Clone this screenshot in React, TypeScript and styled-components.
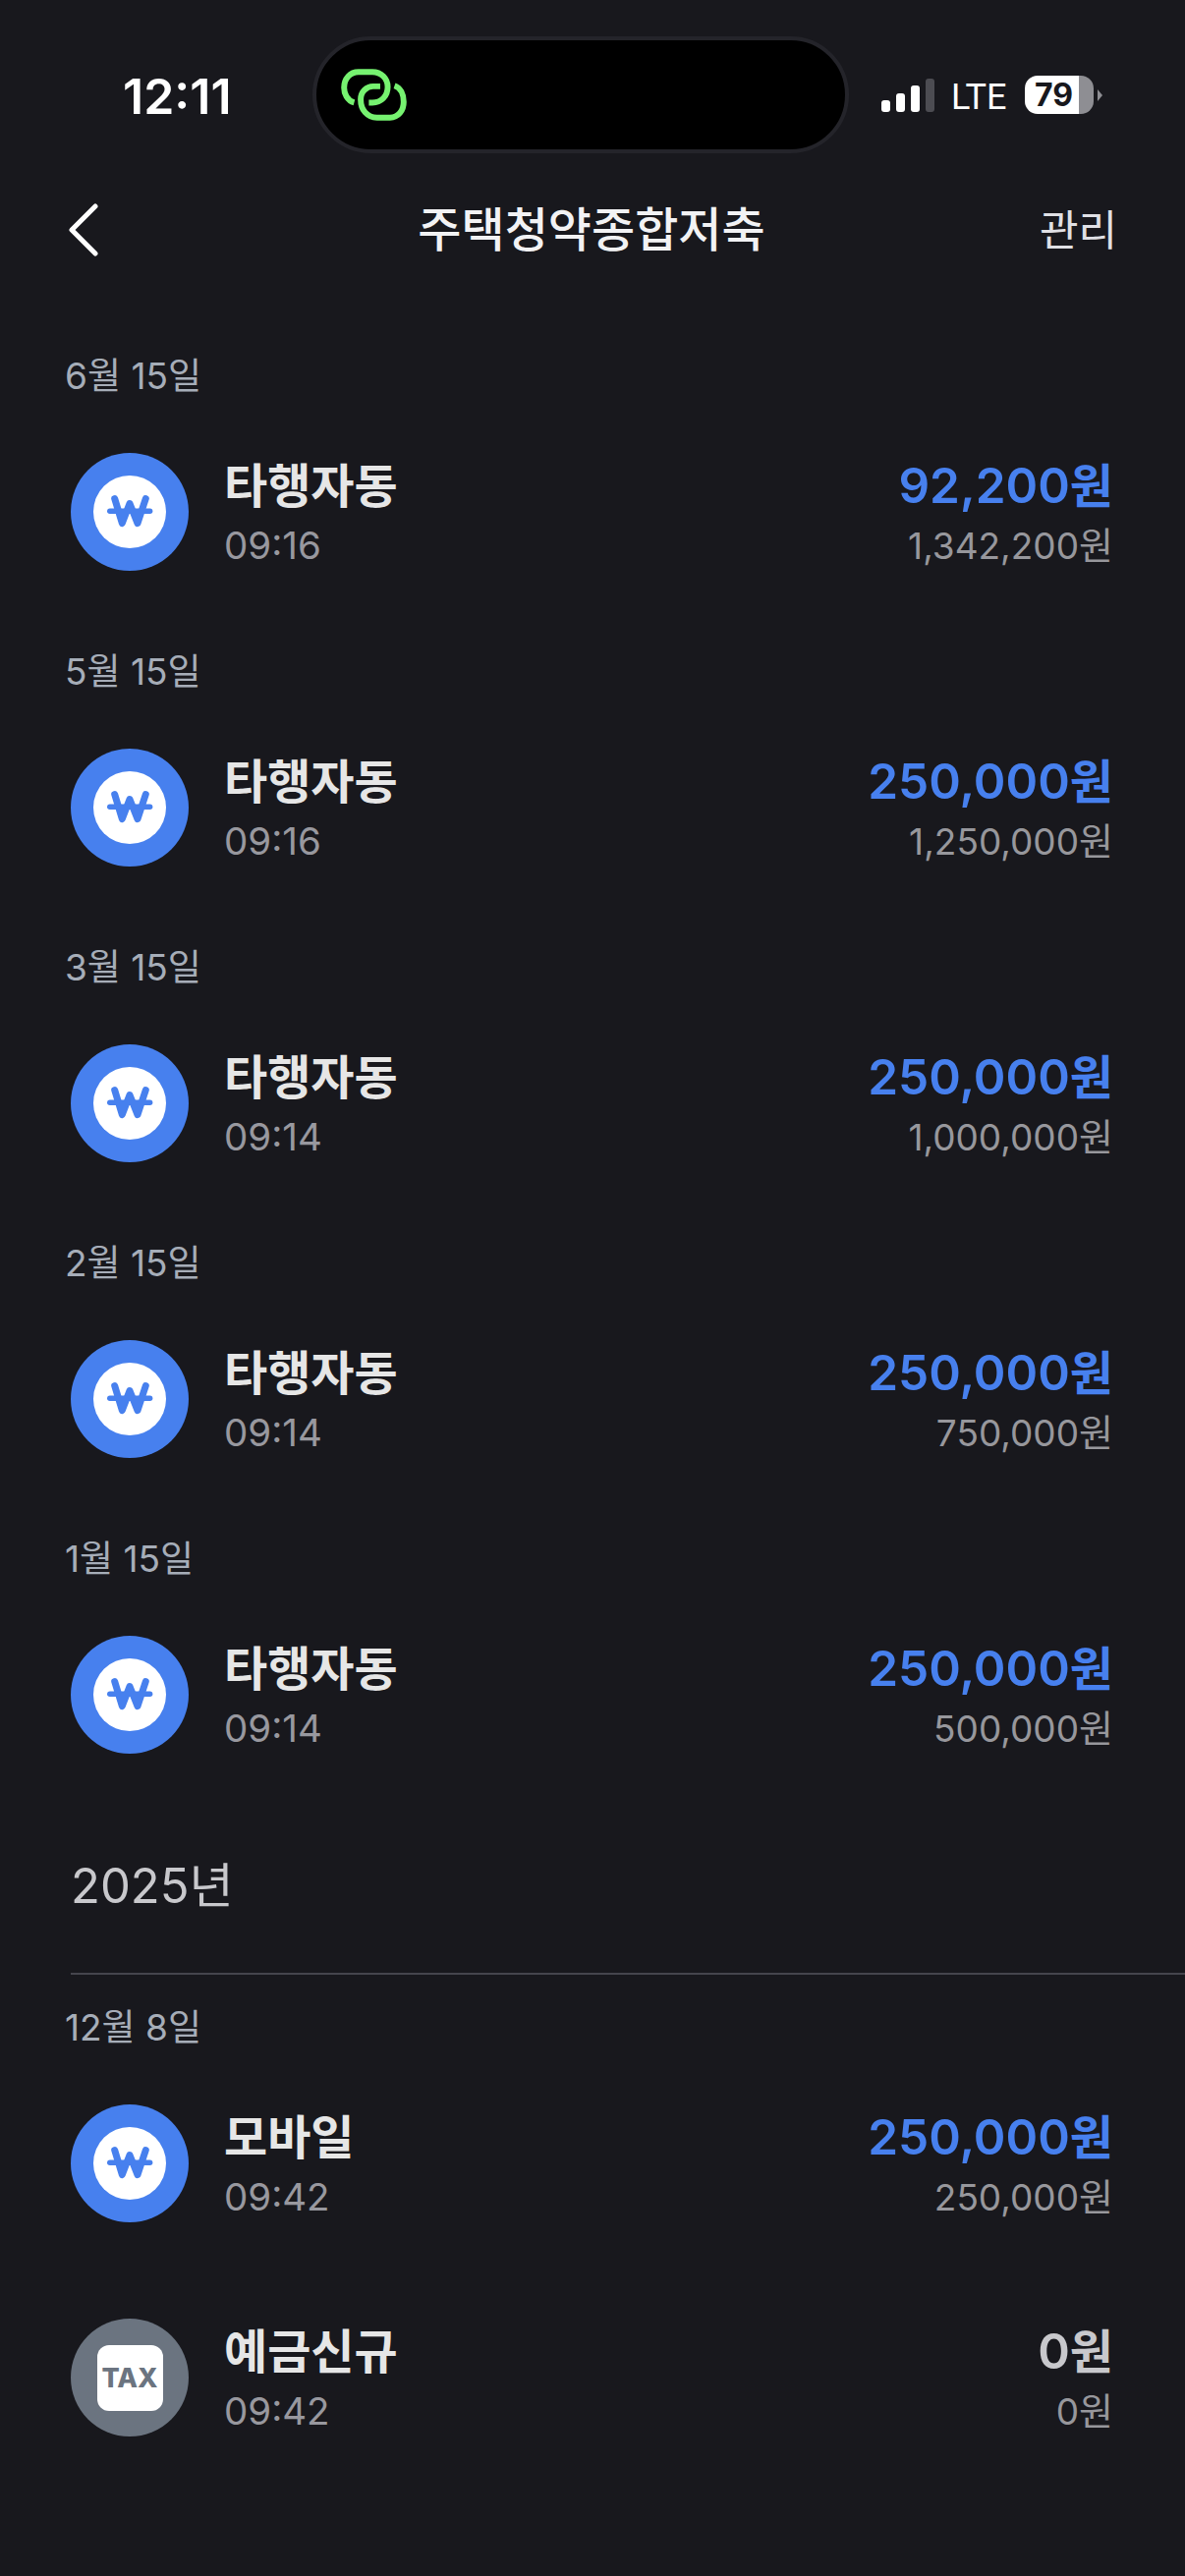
import React from "react";
import styled, { createGlobalStyle } from "styled-components";

type Transaction = {
  title: string;
  time: string;
  amount: string;
  balance: string;
  kind: "won" | "tax";
};

type Day = {
  date: string;
  items: Transaction[];
};

const recentDays: Day[] = [
  { date: "6월 15일", items: [{ title: "타행자동", time: "09:16", amount: "92,200", balance: "1,342,200", kind: "won" }] },
  { date: "5월 15일", items: [{ title: "타행자동", time: "09:16", amount: "250,000", balance: "1,250,000", kind: "won" }] },
  { date: "3월 15일", items: [{ title: "타행자동", time: "09:14", amount: "250,000", balance: "1,000,000", kind: "won" }] },
  { date: "2월 15일", items: [{ title: "타행자동", time: "09:14", amount: "250,000", balance: "750,000", kind: "won" }] },
  { date: "1월 15일", items: [{ title: "타행자동", time: "09:14", amount: "250,000", balance: "500,000", kind: "won" }] },
];

const lastYearDays: Day[] = [
  {
    date: "12월 8일",
    items: [
      { title: "모바일", time: "09:42", amount: "250,000", balance: "250,000", kind: "won" },
      { title: "예금신규", time: "09:42", amount: "0", balance: "0", kind: "tax" },
    ],
  },
];

const DayGroup: React.FC<{ day: Day }> = ({ day }) => (
  <Group>
    <DateLabel>{day.date}</DateLabel>
    <Rows>
      {day.items.map((item) => (
        <Row key={item.title}>
          {item.kind === "won" ? (
            <Badge $color="#4780ee">
              <WonDisc>
                <svg width="74" height="74" viewBox="0 0 74 74" fill="none" stroke="#4780ee" strokeLinecap="round" strokeLinejoin="round">
                  <path d="M21.7 23.5 29.3 48.6 37 28.5 45 48.6 53.3 23.5" strokeWidth="7" />
                  <path d="M16.8 36.3H57.6" strokeWidth="5.5" />
                </svg>
              </WonDisc>
            </Badge>
          ) : (
            <Badge $color="#6b7480">
              <TaxCard>TAX</TaxCard>
            </Badge>
          )}
          <Info>
            <Title>{item.title}</Title>
            <Time>{item.time}</Time>
          </Info>
          <Amounts>
            <Amount $positive={item.kind === "won"}>
              {item.amount}
              <AmountUnit>원</AmountUnit>
            </Amount>
            <Balance>
              {item.balance}
              <BalanceUnit>원</BalanceUnit>
            </Balance>
          </Amounts>
        </Row>
      ))}
    </Rows>
  </Group>
);

export default function App() {
  return (
    <>
      <GlobalStyle />
      <Page>
        <StatusBar>
          <Clock>12:11</Clock>
          <Island>
            <svg width="67" height="53" viewBox="112 120 201 160" fill="none" stroke="#76f270" strokeWidth="18">
              <path d="M152 224C130 218 121 196 121 178 121 150 140 130 165 130H208C235 130 255 150 255 176 255 204 235 224 208 224H197" />
              <path d="M232 174H210C190 174 172 190 172 214 172 246 192 270 222 270H262C288 270 304 248 304 222 304 198 294 178 276 172" />
            </svg>
          </Island>
          <StatusIcons>
            <Signal>
              <SignalBar $height={12} />
              <SignalBar $height={19} />
              <SignalBar $height={27} />
              <SignalBar $height={34} $off />
            </Signal>
            <Network>LTE</Network>
            <Battery $level={79}>79</Battery>
            <BatteryCap />
          </StatusIcons>
        </StatusBar>

        <Header>
          <BackButton aria-label="뒤로">
            <svg width="32" height="54" viewBox="0 0 32 54" fill="none" stroke="#fff" strokeWidth="5" strokeLinecap="round" strokeLinejoin="round">
              <path d="M28 3 4 27 28 51" />
            </svg>
          </BackButton>
          <HeaderTitle>주택청약종합저축</HeaderTitle>
          <ManageButton>관리</ManageButton>
        </Header>

        <Days>
          {recentDays.map((day) => (
            <DayGroup key={day.date} day={day} />
          ))}
        </Days>

        <YearHeading>2025년</YearHeading>
        <YearRule />

        <Days>
          {lastYearDays.map((day) => (
            <DayGroup key={day.date} day={day} />
          ))}
        </Days>
      </Page>
    </>
  );
}

const GlobalStyle = createGlobalStyle`
  html, body {
    margin: 0;
    padding: 0;
    background: #18181d;
  }
  * {
    box-sizing: border-box;
  }
`;

const Page = styled.div`
  width: 1206px;
  height: 2622px;
  overflow: hidden;
  background: #18181d;
  font-family: Inter, "Noto Sans CJK KR", sans-serif;
`;

const StatusBar = styled.div`
  display: flex;
  align-items: center;
  height: 119px;
  margin-top: 37px;
  padding-left: 125px;
`;

const Clock = styled.div`
  width: 193px;
  padding-top: 2px;
  font-size: 50px;
  font-weight: 600;
  letter-spacing: 0;
  color: #fff;
`;

const Island = styled.div`
  display: flex;
  align-items: center;
  width: 546px;
  height: 119px;
  padding-left: 25px;
  background: #000;
  border: 4px solid #24242a;
  border-radius: 60px;
`;

const StatusIcons = styled.div`
  display: flex;
  align-items: center;
  margin-left: 33px;
`;

const Signal = styled.div`
  display: flex;
  align-items: flex-end;
  gap: 6px;
  height: 34px;
`;

const SignalBar = styled.span<{ $height: number; $off?: boolean }>`
  width: 9px;
  height: ${(p) => p.$height}px;
  border-radius: 3px;
  background: ${(p) => (p.$off ? "#4c4c52" : "#fff")};
`;

const Network = styled.div`
  margin-left: 17px;
  width: 75px;
  padding-top: 4px;
  font-family: Roboto, sans-serif;
  font-size: 36px;
  font-weight: 400;
  line-height: 40px;
  color: #fff;
`;

const Battery = styled.div<{ $level: number }>`
  width: 70px;
  height: 39px;
  padding-right: 11px;
  border-radius: 13px;
  background: linear-gradient(90deg, #fff ${(p) => p.$level}%, #8e8e93 ${(p) => p.$level}%);
  font-size: 32px;
  font-weight: 700;
  line-height: 39px;
  text-align: center;
  color: #18181d;
`;

const BatteryCap = styled.span`
  width: 0;
  height: 0;
  margin-left: 4px;
  border-top: 6px solid transparent;
  border-bottom: 6px solid transparent;
  border-left: 5px solid #8e8e93;
`;

const Header = styled.div`
  display: flex;
  align-items: center;
  justify-content: space-between;
  height: 100px;
  margin-top: 28px;
  padding: 0 69px 0 69px;
`;

const BackButton = styled.div`
  display: flex;
  width: 80px;
`;

const HeaderTitle = styled.div`
  font-size: 48px;
  font-weight: 500;
  line-height: 100px;
  color: #f2f2f4;
`;

const ManageButton = styled.div`
  width: 82px;
  font-size: 43px;
  line-height: 100px;
  text-align: right;
  color: #e0e0e5;
`;

const Days = styled.div`
  display: flex;
  flex-direction: column;
  gap: 78px;
  margin-top: 74px;

  &:last-child {
    margin-top: 29px;
  }
`;

const Group = styled.section`
  display: flex;
  flex-direction: column;
  gap: 53px;
`;

const DateLabel = styled.div`
  height: 50px;
  padding-left: 66px;
  font-size: 37px;
  line-height: 50px;
  color: #a6adb8;
`;

const Rows = styled.div`
  display: flex;
  flex-direction: column;
  gap: 98px;
`;

const Row = styled.div`
  display: flex;
  align-items: center;
  height: 120px;
  padding: 0 73px 0 72px;
`;

const Badge = styled.div<{ $color: string }>`
  display: flex;
  align-items: center;
  justify-content: center;
  width: 120px;
  height: 120px;
  border-radius: 50%;
  background: ${(p) => p.$color};
`;

const WonDisc = styled.div`
  display: flex;
  width: 74px;
  height: 74px;
  border-radius: 50%;
  background: #fff;
`;

const TaxCard = styled.div`
  width: 67px;
  height: 67px;
  border-radius: 12px;
  background: #fff;
  font-size: 27px;
  font-weight: 800;
  line-height: 67px;
  text-align: center;
  color: #6b7480;
`;

const Info = styled.div`
  display: flex;
  flex-direction: column;
  gap: 8px;
  margin-left: 36px;
  padding-top: 8px;
`;

const Title = styled.div`
  font-size: 48px;
  font-weight: 600;
  line-height: 52px;
  color: #e6e6e6;
`;

const Time = styled.div`
  font-size: 38.5px;
  line-height: 52px;
  color: #98989f;
`;

const Amounts = styled.div`
  display: flex;
  flex-direction: column;
  align-items: flex-end;
  gap: 8px;
  margin-left: auto;
  padding-top: 8px;
`;

const Amount = styled.div<{ $positive: boolean }>`
  font-size: 49.5px;
  font-weight: 600;
  line-height: 52px;
  color: ${(p) => (p.$positive ? "#4780ee" : "#c8c8cc")};
`;

const AmountUnit = styled.span`
  font-size: 48px;
`;

const Balance = styled.div`
  font-size: 37px;
  line-height: 52px;
  color: #97979c;
`;

const BalanceUnit = styled.span`
  font-size: 38px;
`;

const YearHeading = styled.div`
  height: 60px;
  margin-top: 105px;
  padding-left: 72px;
  font-size: 49px;
  line-height: 60px;
  color: #c8c8cc;
`;

const YearRule = styled.div`
  height: 2px;
  margin: 58px 0 0 72px;
  background: #45454d;
`;
